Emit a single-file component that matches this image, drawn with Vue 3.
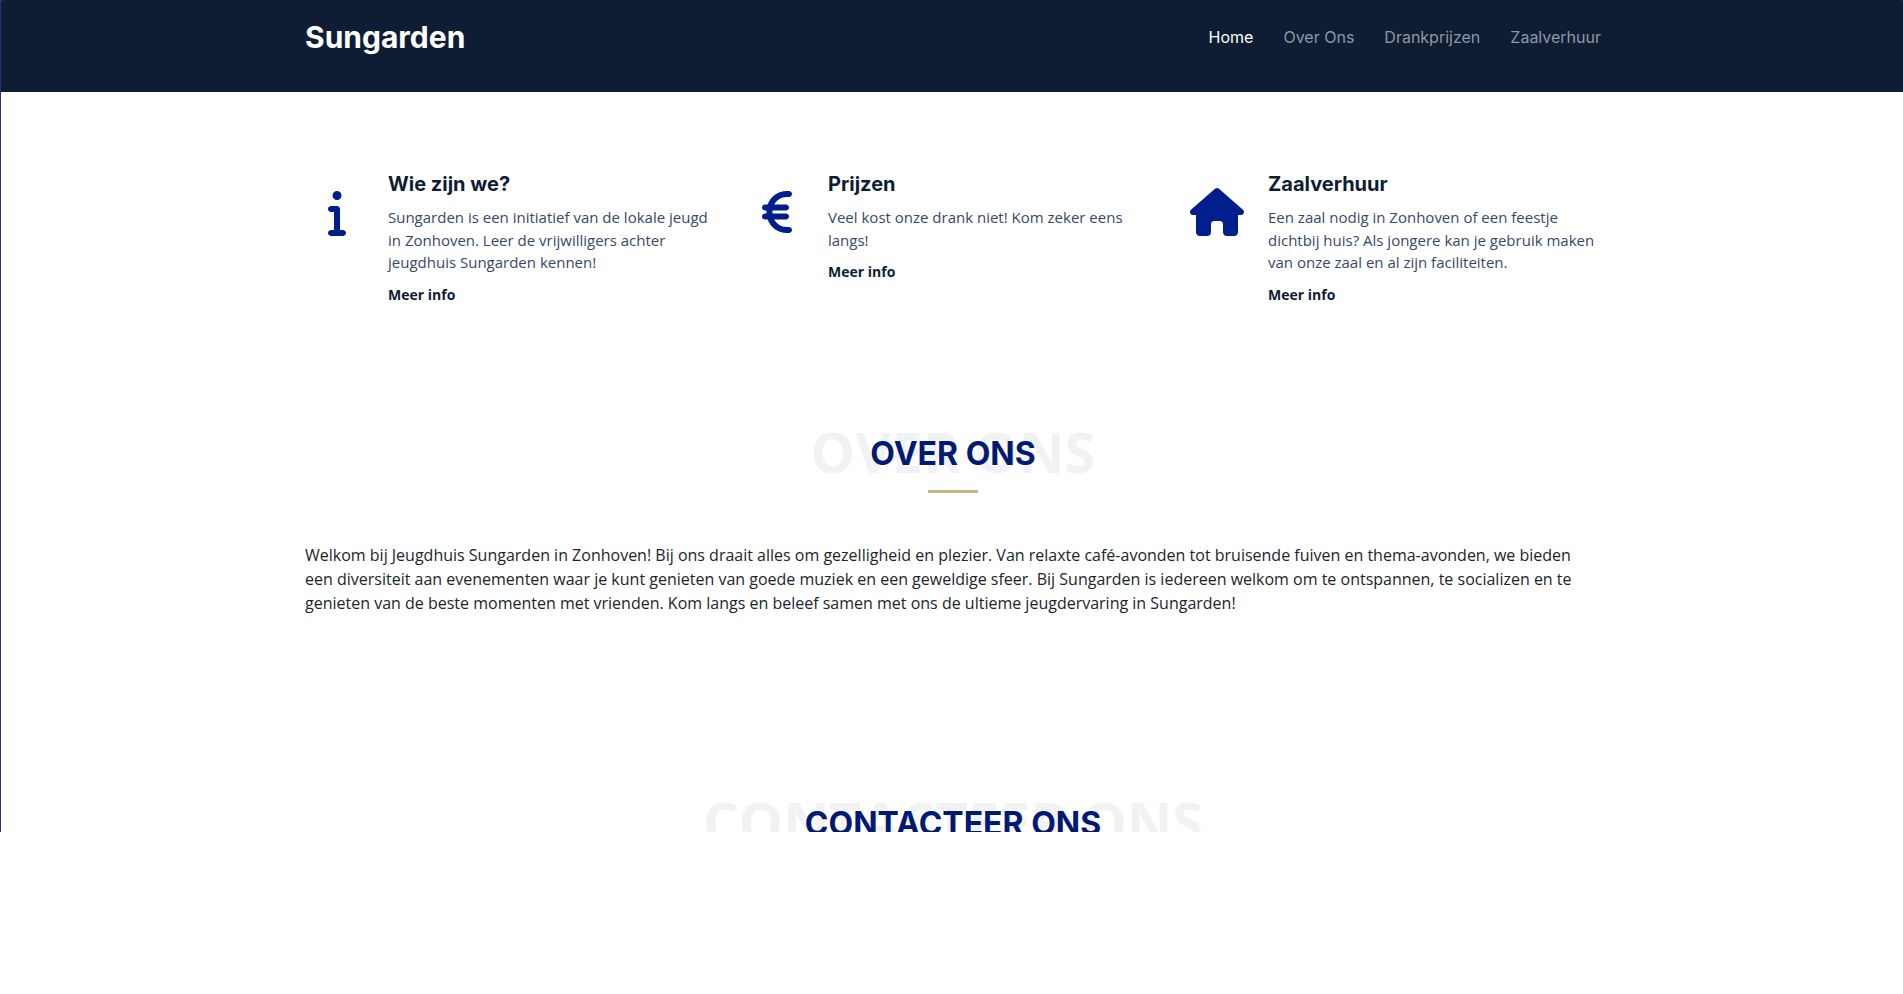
<script setup>
const links = ['Home', 'Over Ons', 'Drankprijzen', 'Zaalverhuur']

const features = [
  {
    title: 'Wie zijn we?',
    text: 'Sungarden is een initiatief van de lokale jeugd in Zonhoven. Leer de vrijwilligers achter jeugdhuis Sungarden kennen!',
    box: '0 0 192 512',
    path: 'M48 80a48 48 0 1 1 96 0A48 48 0 1 1 48 80zM0 224c0-17.7 14.3-32 32-32H96c17.7 0 32 14.3 32 32V448h32c17.7 0 32 14.3 32 32s-14.3 32-32 32H32c-17.7 0-32-14.3-32-32s14.3-32 32-32H64V256H32c-17.7 0-32-14.3-32-32z',
  },
  {
    title: 'Prijzen',
    text: 'Veel kost onze drank niet! Kom zeker eens langs!',
    box: '0 0 320 512',
    path: 'M48.1 240c-.1 2.7-.1 5.3-.1 8v16c0 2.7 0 5.3 .1 8H32c-17.7 0-32 14.3-32 32s14.3 32 32 32H60.3C89.9 419.9 170 480 264 480h24c17.7 0 32-14.3 32-32s-14.3-32-32-32H264c-57.9 0-108.2-32.4-133.9-80H256c17.7 0 32-14.3 32-32s-14.3-32-32-32H112.2c-.1-2.6-.2-5.3-.2-8V248c0-2.7 .1-5.4 .2-8H256c17.7 0 32-14.3 32-32s-14.3-32-32-32H130.1c25.7-47.6 76-80 133.9-80h24c17.7 0 32-14.3 32-32s-14.3-32-32-32H264C170 32 89.9 92.1 60.3 176H32c-17.7 0-32 14.3-32 32s14.3 32 32 32H48.1z',
  },
  {
    title: 'Zaalverhuur',
    text: 'Een zaal nodig in Zonhoven of een feestje dichtbij huis? Als jongere kan je gebruik maken van onze zaal en al zijn faciliteiten.',
    box: '0 0 576 512',
    path: 'M575.8 255.5c0 18-15 32.1-32 32.1h-32l.7 160.2c0 2.7-.2 5.4-.5 8.1V472c0 22.1-17.9 40-40 40H456c-1.1 0-2.2 0-3.3-.1c-1.4 .1-2.8 .1-4.2 .1H416 392c-22.1 0-40-17.9-40-40V448 384c0-17.7-14.3-32-32-32H256c-17.7 0-32 14.3-32 32v64 24c0 22.1-17.9 40-40 40H160 128.1c-1.5 0-3-.1-4.5-.2c-1.2 .1-2.4 .2-3.6 .2H104c-22.1 0-40-17.9-40-40V360c0-.9 0-1.9 .1-2.8V287.6H32c-18 0-32-14-32-32.1c0-9 3-17 10-24L266.4 8c7-7 15-8 22-8s15 2 21 7L564.8 231.5c8 7 12 15 11 24z',
  },
]
</script>

<template>
  <div class="page">
    <header class="header">
      <div class="container bar">
        <a class="brand" href="#">Sungarden</a>
        <nav class="nav">
          <a v-for="(link, i) in links" :key="link" href="#" :class="{ active: i === 0 }">{{ link }}</a>
        </nav>
      </div>
    </header>

    <main>
      <section class="container features">
        <article v-for="f in features" :key="f.title" class="feature">
          <div class="icon">
            <svg :viewBox="f.box" height="48" aria-hidden="true"><path :d="f.path" /></svg>
          </div>
          <div class="body">
            <h4>{{ f.title }}</h4>
            <p>{{ f.text }}</p>
            <a href="#">Meer info</a>
          </div>
        </article>
      </section>

      <section class="container about">
        <div class="title">
          <span class="ghost" aria-hidden="true">Over ons</span>
          <h2>Over ons</h2>
        </div>
        <p>
          Welkom bij Jeugdhuis Sungarden in Zonhoven! Bij ons draait alles om gezelligheid en plezier. Van relaxte
          café-avonden tot bruisende fuiven en thema-avonden, we bieden een diversiteit aan evenementen waar je kunt
          genieten van goede muziek en een geweldige sfeer. Bij Sungarden is iedereen welkom om te ontspannen, te
          socializen en te genieten van de beste momenten met vrienden. Kom langs en beleef samen met ons de ultieme
          jeugdervaring in Sungarden!
        </p>
      </section>

      <section class="container contact">
        <div class="title">
          <span class="ghost" aria-hidden="true">Contacteer ons</span>
          <h2>Contacteer ons</h2>
        </div>
      </section>
    </main>
  </div>
</template>

<style>
body {
  margin: 0;
  background: #fff;
}
</style>

<style scoped>
.page {
  background: #2b2f83;
  padding-left: 1px;
  font-family: "Open Sans", sans-serif;
  font-size: 16px;
  line-height: 1.5;
  color: #0e1d34;
}
a {
  text-decoration: none;
}
.container {
  box-sizing: border-box;
  width: 100%;
  max-width: 1320px;
  margin: 0 auto;
  padding: 0 12px;
}
.header {
  box-sizing: border-box;
  background: #0e1d34;
  border-radius: 4px 2px 0 0;
  height: 92px;
  padding-left: 2px;
}
.bar {
  display: flex;
  justify-content: space-between;
  align-items: center;
  padding-top: 16px;
}
.brand {
  font: 700 30px/42px Inter, sans-serif;
  color: #fff;
}
.nav {
  display: flex;
  gap: 30px;
}
.nav a {
  font: 400 16px/24px Inter, sans-serif;
  color: #9197a1;
}
.nav a.active {
  color: #fff;
}
main {
  background: #fff;
  padding-left: 2px;
}
.features {
  display: grid;
  grid-template-columns: repeat(3, 1fr);
  gap: 24px;
  padding-top: 80px;
  padding-bottom: 60px;
}
.feature {
  display: flex;
  gap: 20px;
}
.icon {
  flex: none;
  display: flex;
  justify-content: center;
  width: 63px;
  padding-top: 16px;
}
.icon svg {
  fill: #001f8d;
}
.body {
  flex: 1;
}
.body h4 {
  margin: 0 0 10px;
  font: 700 20px/24px Inter, sans-serif;
}
.body p {
  margin: 0 0 10px;
  font-size: 15px;
  color: #354a68;
}
.body a {
  display: block;
  font-size: 14px;
  line-height: 21px;
  font-weight: 700;
  color: #0e1d34;
}
.about {
  padding-top: 59px;
  padding-bottom: 60px;
}
.about > p {
  margin: 0;
  padding: 50px 0 119px;
  color: #212529;
}
.title {
  position: relative;
  text-align: center;
  text-transform: uppercase;
  padding: 11px 0 20px;
}
.title::after {
  content: "";
  position: absolute;
  left: 50%;
  bottom: 0;
  width: 50px;
  height: 3px;
  margin-left: -25px;
  background: #c2b883;
}
.title h2 {
  position: relative;
  margin: 0;
  font: 700 32px/38px Inter, sans-serif;
  color: #001973;
}
.ghost {
  position: absolute;
  left: 0;
  right: 0;
  top: 0;
  font-size: 56px;
  line-height: 54px;
  font-weight: 700;
  color: #f1f2f4;
}
.contact {
  height: 38px;
  overflow: hidden;
}
</style>
